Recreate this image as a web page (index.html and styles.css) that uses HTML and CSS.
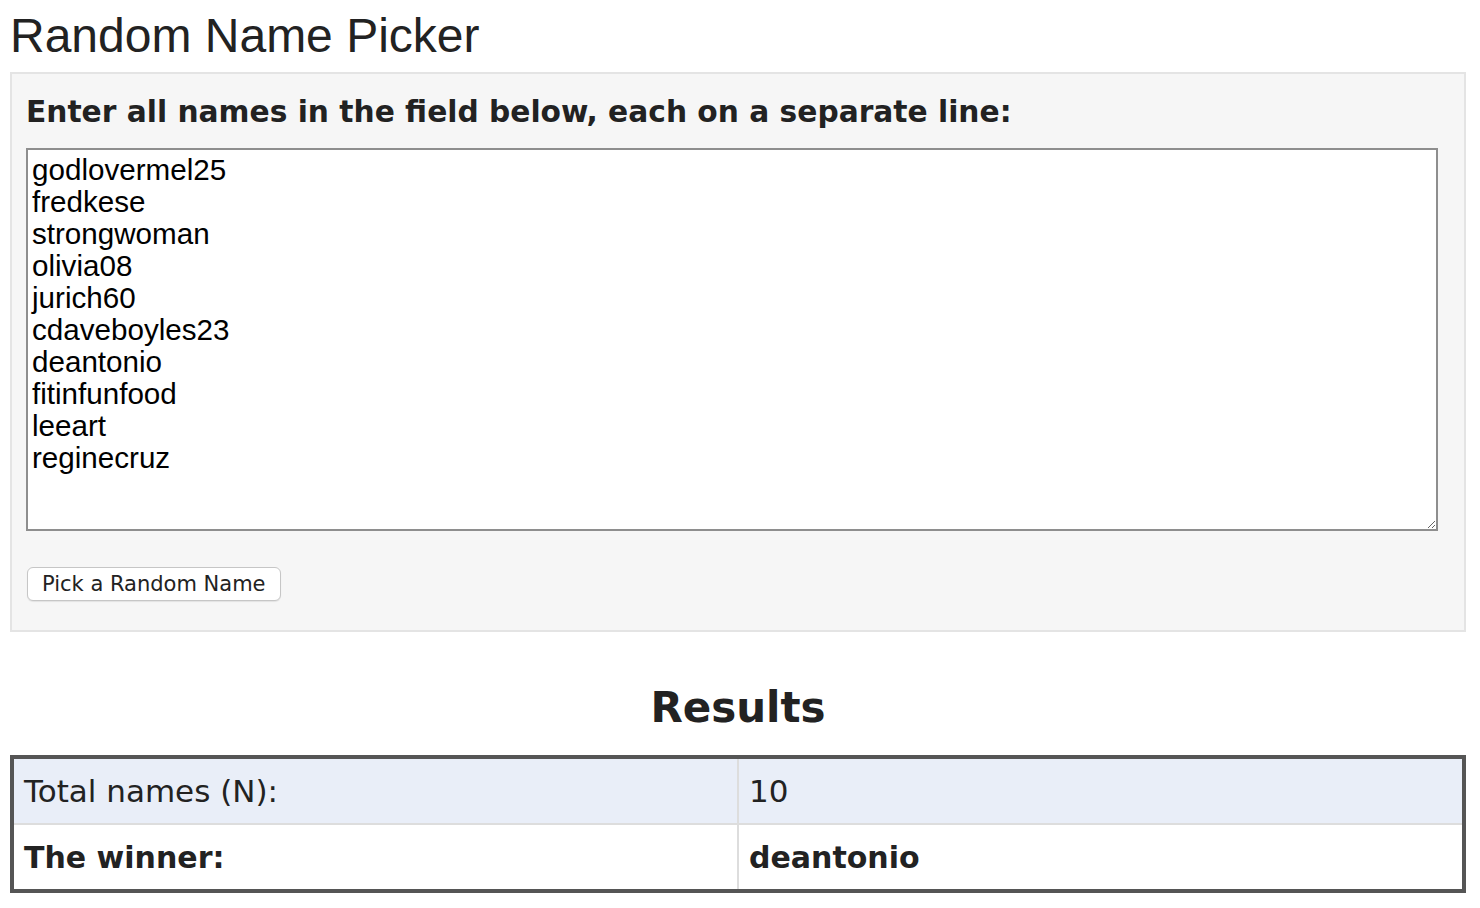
FILE: index.html
```html
<!DOCTYPE html>
<html lang="en">
<head>
    <meta charset="UTF-8">
    <meta name="viewport" content="width=device-width, initial-scale=1.0">
    <title>Random Name Picker</title>
    <link rel="stylesheet" href="styles.css">
</head>
<body>
    <h1>Random Name Picker</h1>

    <div class="picker">
        <label class="picker-label" for="names">Enter all names in the field below, each on a separate line:</label>
        <textarea id="names" class="names">godlovermel25
fredkese
strongwoman
olivia08
jurich60
cdaveboyles23
deantonio
fitinfunfood
leeart
reginecruz</textarea>
        <button class="pick-button" type="button">Pick a Random Name</button>
    </div>

    <h2 class="results-title">Results</h2>
    <table class="results">
        <tr class="row-total">
            <td>Total names (N):</td>
            <td>10</td>
        </tr>
        <tr>
            <td><strong>The winner:</strong></td>
            <td><strong>deantonio</strong></td>
        </tr>
    </table>
</body>
</html>
```

FILE: styles.css
```css
body {
    margin: 0 14px 0 10px;
    background: #fff;
    color: #222;
    font-family: "DejaVu Sans", Verdana, sans-serif;
}
h1 {
    font-family: "Liberation Sans", Arial, sans-serif;
    font-weight: normal;
    font-size: 48px;
    line-height: 55px;
    margin: 8px 0 9px;
}
.picker {
    background: #f6f6f6;
    border: 2px solid #e4e4e4;
    padding: 21px 26px 29px 14px;
}
.picker-label {
    display: block;
    font-weight: bold;
    font-size: 29.7px;
    line-height: 34px;
    margin: 0 0 19px 0;
}
.names {
    display: block;
    box-sizing: border-box;
    width: 100%;
    height: 383px;
    margin: 0;
    padding: 4px 4px;
    border: 2px solid #8e8e8e;
    font-family: "Liberation Sans", Arial, sans-serif;
    font-size: 29.6px;
    line-height: 32px;
    color: #000;
    background: #fff;
}
.pick-button {
    margin: 36px 0 0 1px;
    height: 34px;
    padding: 0 14px;
    background: #fff;
    border: 1px solid #c6c6c6;
    border-radius: 6px;
    box-shadow: 0 1px 1px rgba(0,0,0,0.08);
    font-family: "DejaVu Sans", sans-serif;
    font-size: 21px;
    color: #222;
}
.results-title {
    text-align: center;
    font-size: 42px;
    line-height: 48px;
    margin: 52px 0 23px;
}
.results {
    width: 100%;
    border-collapse: collapse;
    border: 4px solid #555;
    font-size: 31px;
}
.results td {
    width: 50%;
    height: 64px;
    padding: 0 10px;
    border: 2px solid #ddd;
    background: #fff;
}
.results strong {
    font-size: 30px;
}
.row-total td {
    background: #e9eef8;
}
```
